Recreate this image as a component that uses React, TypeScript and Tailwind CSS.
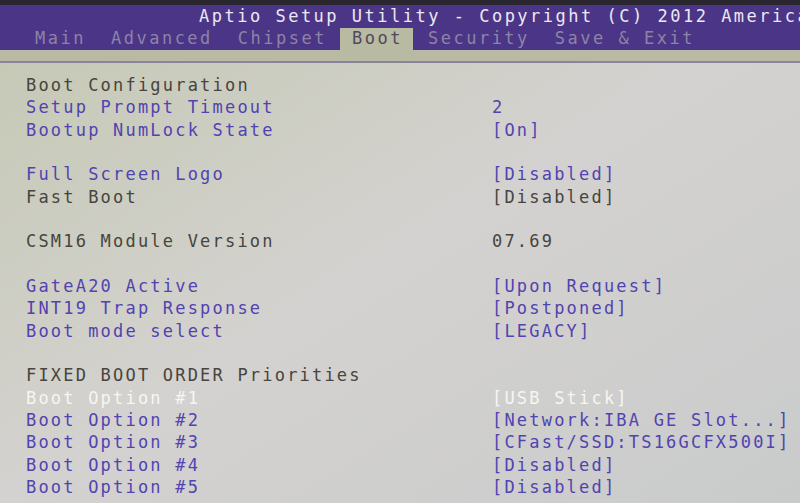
const BLUE = 'text-[#5143b0]'
const DARK = 'text-[#47453d]'
const WHITE = 'text-[#f6f6f2]'

type Row = { label?: string; value?: string; tone?: 'blue' | 'dark' | 'white' }

const rows: Row[] = [
  { label: 'Boot Configuration', tone: 'dark' },
  { label: 'Setup Prompt Timeout', value: '2', tone: 'blue' },
  { label: 'Bootup NumLock State', value: '[On]', tone: 'blue' },
  {},
  { label: 'Full Screen Logo', value: '[Disabled]', tone: 'blue' },
  { label: 'Fast Boot', value: '[Disabled]', tone: 'dark' },
  {},
  { label: 'CSM16 Module Version', value: '07.69', tone: 'dark' },
  {},
  { label: 'GateA20 Active', value: '[Upon Request]', tone: 'blue' },
  { label: 'INT19 Trap Response', value: '[Postponed]', tone: 'blue' },
  { label: 'Boot mode select', value: '[LEGACY]', tone: 'blue' },
  {},
  { label: 'FIXED BOOT ORDER Priorities', tone: 'dark' },
  { label: 'Boot Option #1', value: '[USB Stick]', tone: 'white' },
  { label: 'Boot Option #2', value: '[Network:IBA GE Slot...]', tone: 'blue' },
  { label: 'Boot Option #3', value: '[CFast/SSD:TS16GCFX500I]', tone: 'blue' },
  { label: 'Boot Option #4', value: '[Disabled]', tone: 'blue' },
  { label: 'Boot Option #5', value: '[Disabled]', tone: 'blue' },
]

const tabs = ['Main', 'Advanced', 'Chipset', 'Boot', 'Security', 'Save & Exit']

export default function App() {
  return (
    <div
      className="w-[800px] h-[503px] overflow-hidden flex flex-col bg-gradient-to-br from-[#c4c8b2] via-[#d4d2d0] to-[#c9cbcb] text-[17px] tracking-[2.2px] whitespace-pre"
      style={{ fontFamily: '"DejaVu Sans Mono", "Liberation Mono", monospace' }}
    >
      {/* header */}
      <div className="h-[5px] shrink-0 bg-[#2a2630]" />
      <div className="shrink-0 bg-[#4b3586]">
        <div className="h-[23px] flex items-center pl-[199px] text-[#ece8f2] tracking-[2.5px] overflow-hidden">
          Aptio Setup Utility - Copyright (C) 2012 America
        </div>
        <div className="h-[22px] flex items-center pl-[35px] tracking-[2.5px]">
          {tabs.map((t) =>
            t === 'Boot' ? (
              <span key={t} className="h-full flex items-center pl-[12px] pr-[10px] -ml-[12px] mr-[15px] bg-[#b9baa2] text-[#4e4a5e]">
                {t}
              </span>
            ) : (
              <span key={t} className="text-[#8d83a8] mr-[25px]">
                {t}
              </span>
            )
          )}
        </div>
      </div>
      <div className="h-[11px] shrink-0 bg-[#b8baa3]" />
      <div className="h-[2px] shrink-0 bg-[#8a839a]" />

      {/* settings */}
      <div className="shrink-0 pt-[11px] pl-[26px] leading-[22.33px]">
        {rows.map((r, i) => {
          const tone = r.tone === 'white' ? WHITE : r.tone === 'dark' ? DARK : BLUE
          return (
            <div key={i} className={`h-[22.33px] grid grid-cols-[466px_1fr] ${tone}`}>
              <span>{r.label ?? ''}</span>
              <span>{r.value ?? ''}</span>
            </div>
          )
        })}
      </div>
    </div>
  )
}
